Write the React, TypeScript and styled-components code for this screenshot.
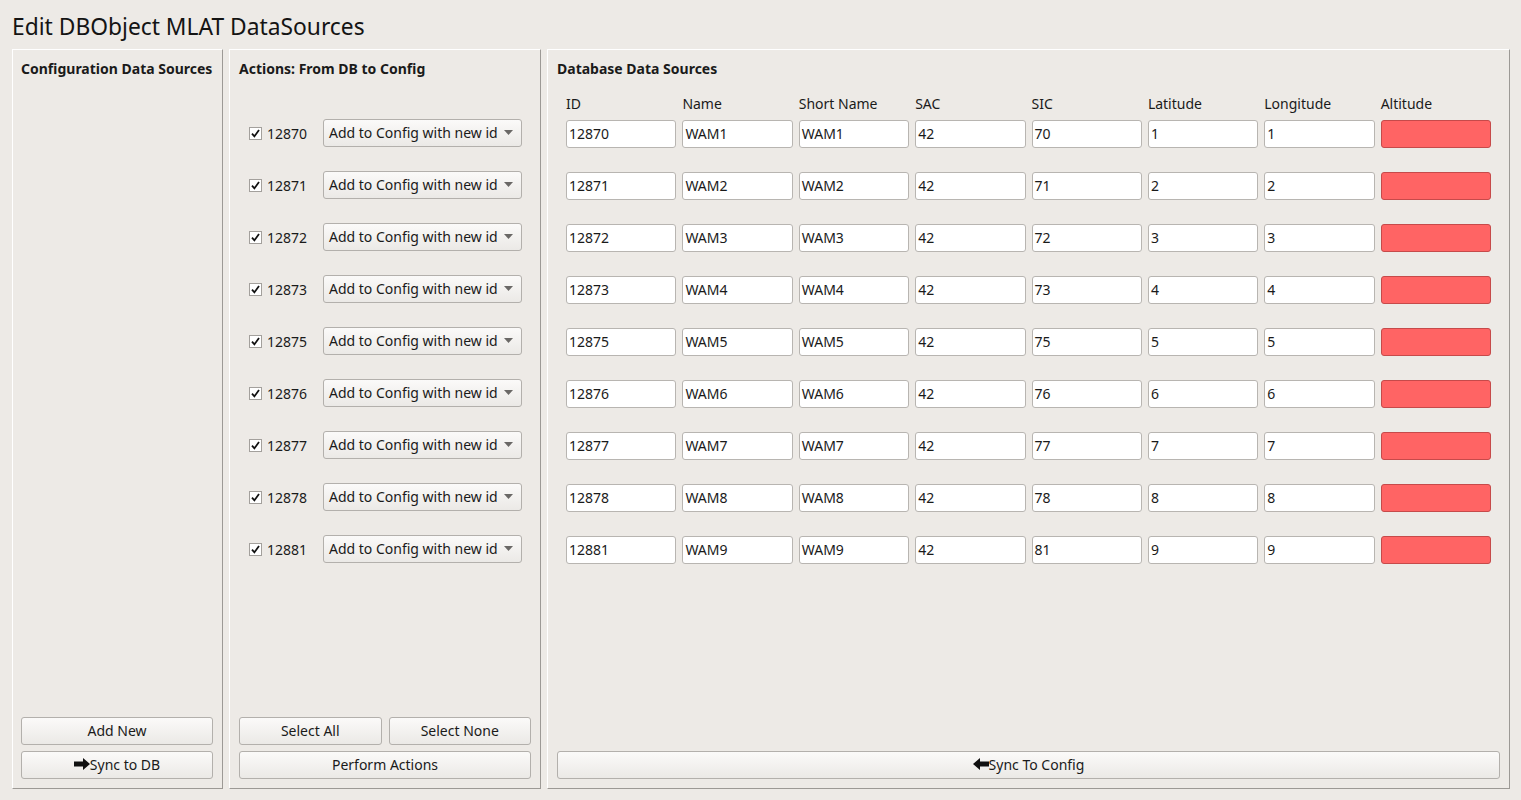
import styled, { createGlobalStyle } from "styled-components";

const Global = createGlobalStyle`
  html, body {
    margin: 0;
    padding: 0;
    background: #edeae6;
  }
  body {
    font-family: "Noto Sans", "DejaVu Sans", sans-serif;
    font-size: 14px;
    color: #1a1a1a;
  }
`;

const Window = styled.div`
  width: 1521px;
  height: 800px;
  box-sizing: border-box;
  padding: 0 11px 11px 12px;
  display: flex;
  flex-direction: column;
`;

const Title = styled.h1`
  margin: 0;
  height: 49px;
  box-sizing: border-box;
  padding-top: 12px;
  font-size: 22.8px;
  font-weight: normal;
  line-height: 30px;
  color: #141414;
`;

const Panels = styled.div`
  flex: 1;
  display: flex;
  gap: 6px;
  min-height: 0;
`;

const Panel = styled.div<{ $w?: number; $padL?: number }>`
  ${(p) => (p.$w ? `width: ${p.$w}px;` : "flex: 1;")}
  box-sizing: border-box;
  display: flex;
  flex-direction: column;
  border-top: 1px solid #ffffff;
  border-left: 1px solid #ffffff;
  border-right: 1px solid #9c9995;
  border-bottom: 1px solid #9c9995;
  padding: 9px 9px 9px ${(p) => p.$padL ?? 9}px;
`;

const PanelTitle = styled.div`
  font-weight: bold;
  line-height: 19px;
  white-space: nowrap;
`;

const Body = styled.div`
  flex: 1;
`;

const Footer = styled.div`
  display: flex;
  flex-direction: column;
  gap: 6px;
`;

const ButtonRow = styled.div`
  display: flex;
  gap: 7px;
`;

const Button = styled.button<{ $grow?: boolean }>`
  flex: ${(p) => (p.$grow ? "1 1 0" : "none")};
  width: ${(p) => (p.$grow ? "auto" : "100%")};
  height: 28px;
  box-sizing: border-box;
  border: 1px solid #b3b0ac;
  border-radius: 3px;
  background: linear-gradient(#fbfaf9, #ebe9e6);
  font-family: inherit;
  font-size: 14px;
  color: #1a1a1a;
  display: flex;
  align-items: center;
  justify-content: center;
  padding: 0 0 2px 0;
`;

const ActionList = styled.div`
  padding: 41px 0 0 10px;
  display: flex;
  flex-direction: column;
  gap: 24px;
`;

const ActionRow = styled.div`
  display: flex;
  align-items: center;
  height: 28px;
`;

const Check = styled.span`
  width: 13px;
  height: 13px;
  box-sizing: border-box;
  border: 1px solid #a3a09c;
  background: #fff;
  display: inline-flex;
  align-items: center;
  justify-content: center;
  margin-right: 5px;
`;

const ActionId = styled.span`
  width: 56px;
`;

const Combo = styled.div`
  width: 199px;
  height: 28px;
  box-sizing: border-box;
  border: 1px solid #b3b0ac;
  border-radius: 3px;
  background: linear-gradient(#fbfaf9, #ebe9e6);
  display: flex;
  align-items: center;
  justify-content: space-between;
  padding: 0 8px 1px 5px;
`;

const Grid = styled.div`
  margin: 16px 9px 0 9px;
  display: grid;
  grid-template-columns: repeat(8, 1fr);
  column-gap: 6px;
  row-gap: 24px;
`;

const HeaderRow = styled.div`
  grid-column: 1 / -1;
  display: grid;
  grid-template-columns: repeat(8, 1fr);
  column-gap: 6px;
  margin-bottom: -17px;
`;

const HeadCell = styled.div`
  line-height: 19px;
`;

const Field = styled.div<{ $bad?: boolean }>`
  height: 28px;
  box-sizing: border-box;
  border: 1px solid ${(p) => (p.$bad ? "#c64a4a" : "#b8b5b1")};
  border-radius: 3px;
  background: ${(p) => (p.$bad ? "#ff6464" : "#ffffff")};
  display: flex;
  align-items: center;
  padding: 0 0 1px 2px;
`;

const Arrow = ({ left }: { left?: boolean }) => (
  <svg width="16" height="12" viewBox="0 0 16 12" style={{ transform: left ? "scaleX(-1)" : undefined }}>
    <polygon points="0,3.5 9,3.5 9,0 16,6 9,12 9,8.5 0,8.5" fill="#111" />
  </svg>
);

const rows = [
  { id: "12870", n: 1, sic: "70" },
  { id: "12871", n: 2, sic: "71" },
  { id: "12872", n: 3, sic: "72" },
  { id: "12873", n: 4, sic: "73" },
  { id: "12875", n: 5, sic: "75" },
  { id: "12876", n: 6, sic: "76" },
  { id: "12877", n: 7, sic: "77" },
  { id: "12878", n: 8, sic: "78" },
  { id: "12881", n: 9, sic: "81" },
];

const heads = ["ID", "Name", "Short Name", "SAC", "SIC", "Latitude", "Longitude", "Altitude"];

export default function App() {
  return (
    <Window>
      <Global />
      <Title>Edit DBObject MLAT DataSources</Title>
      <Panels>
        <Panel $w={211} $padL={8}>
          <PanelTitle>Configuration Data Sources</PanelTitle>
          <Body />
          <Footer>
            <Button>Add New</Button>
            <Button>
              <Arrow />
              Sync to DB
            </Button>
          </Footer>
        </Panel>
        <Panel $w={312}>
          <PanelTitle>Actions: From DB to Config</PanelTitle>
          <Body>
            <ActionList>
              {rows.map((r) => (
                <ActionRow key={r.id}>
                  <Check>
                    <svg width="9" height="9" viewBox="0 0 9 9">
                      <path d="M1 4.6 L3.4 7.4 L8 1" stroke="#111" strokeWidth="1.8" fill="none" />
                    </svg>
                  </Check>
                  <ActionId>{r.id}</ActionId>
                  <Combo>
                    <span>Add to Config with new id</span>
                    <svg width="9" height="5" viewBox="0 0 9 5">
                      <polygon points="0,0 9,0 4.5,5" fill="#6a6866" />
                    </svg>
                  </Combo>
                </ActionRow>
              ))}
            </ActionList>
          </Body>
          <Footer>
            <ButtonRow>
              <Button $grow>Select All</Button>
              <Button $grow>Select None</Button>
            </ButtonRow>
            <Button>Perform Actions</Button>
          </Footer>
        </Panel>
        <Panel>
          <PanelTitle>Database Data Sources</PanelTitle>
          <Body>
            <Grid>
              <HeaderRow>
                {heads.map((h) => (
                  <HeadCell key={h}>{h}</HeadCell>
                ))}
              </HeaderRow>
              {rows.map((r) => [
                <Field key={r.id + "a"}>{r.id}</Field>,
                <Field key={r.id + "b"}>WAM{r.n}</Field>,
                <Field key={r.id + "c"}>WAM{r.n}</Field>,
                <Field key={r.id + "d"}>42</Field>,
                <Field key={r.id + "e"}>{r.sic}</Field>,
                <Field key={r.id + "f"}>{r.n}</Field>,
                <Field key={r.id + "g"}>{r.n}</Field>,
                <Field key={r.id + "h"} $bad />,
              ])}
            </Grid>
          </Body>
          <Footer>
            <Button>
              <Arrow left />
              Sync To Config
            </Button>
          </Footer>
        </Panel>
      </Panels>
    </Window>
  );
}
